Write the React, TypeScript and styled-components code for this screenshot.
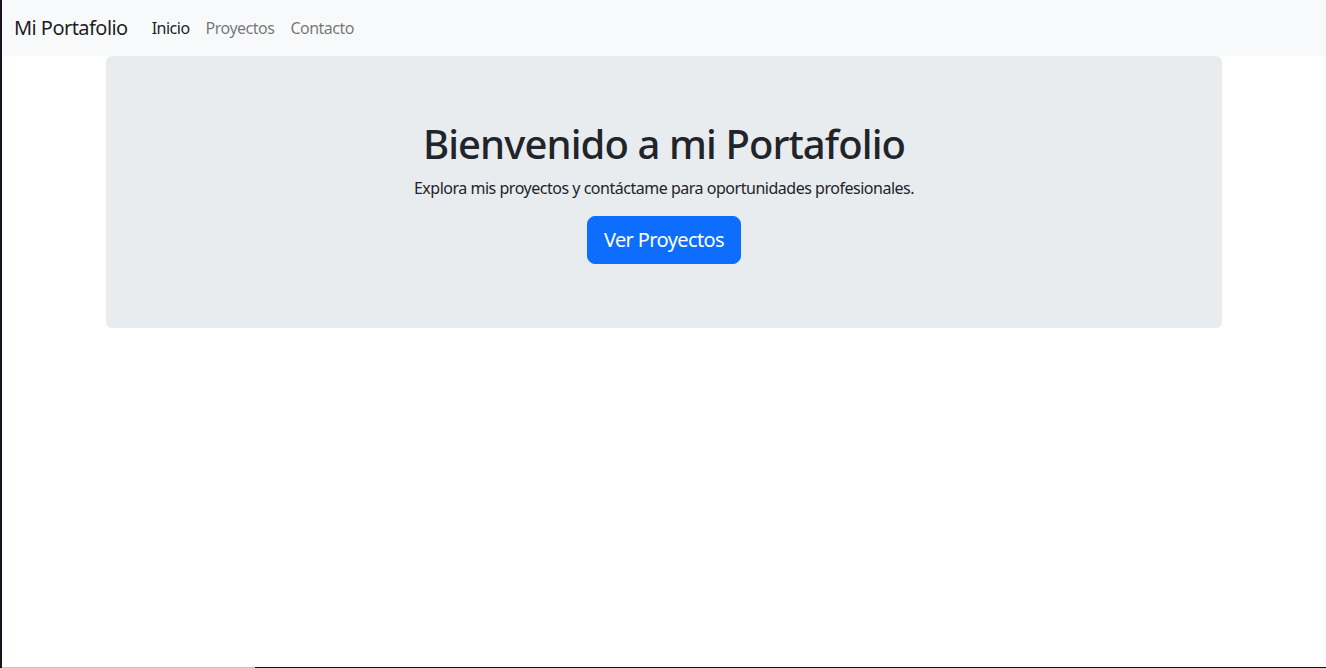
import styled, { createGlobalStyle } from 'styled-components';

const GlobalStyle = createGlobalStyle`
  html, body {
    margin: 0;
    padding: 0;
  }

  body {
    font-family: 'Noto Sans', 'Open Sans', sans-serif;
    color: #212529;
    background:
      linear-gradient(to right, #c4c4c4 255px, #111 255px) left bottom / 100% 1px no-repeat,
      #fff;
    min-height: 668px;
    box-sizing: border-box;
    border-left: 2px solid #1b1220;
  }

  *, *::before, *::after {
    box-sizing: border-box;
  }
`;

const Navbar = styled.nav`
  background-color: #f8f9fa;
  height: 56px;
  padding: 8px 12px;
  display: flex;
  align-items: center;
`;

const Brand = styled.a`
  font-size: 20px;
  line-height: 30px;
  letter-spacing: -0.55px;
  padding: 5px 0;
  margin-right: 16px;
  color: rgba(0, 0, 0, 0.9);
  text-decoration: none;
`;

const NavList = styled.ul`
  display: flex;
  list-style: none;
  margin: 0;
  padding: 0;
`;

const NavLink = styled.a<{ $active?: boolean }>`
  display: block;
  padding: 8px;
  font-size: 16px;
  line-height: 24px;
  letter-spacing: -0.5px;
  color: ${(p) => (p.$active ? 'rgba(0, 0, 0, 0.9)' : 'rgba(0, 0, 0, 0.55)')};
  text-decoration: none;
`;

const Container = styled.main`
  width: 1116px;
  margin: 0 auto;
`;

const Hero = styled.section`
  background-color: #e9ecef;
  border-radius: 6px;
  padding: 64px 16px;
  display: flex;
  flex-direction: column;
  align-items: center;
  text-align: center;
`;

const Title = styled.h1`
  margin: 0 0 8px;
  font-size: 40px;
  line-height: 48px;
  font-weight: 500;
  letter-spacing: -0.9px;
`;

const Lead = styled.p`
  margin: 0 0 16px;
  font-size: 16px;
  line-height: 24px;
  letter-spacing: -0.48px;
`;

const PrimaryButton = styled.a`
  display: inline-block;
  padding: 8px 16px;
  font-size: 20px;
  line-height: 30px;
  letter-spacing: -0.6px;
  border: 1px solid #0d6efd;
  border-radius: 8px;
  background-color: #0d6efd;
  color: #fff;
  text-decoration: none;
`;

export default function App() {
  const links = [
    { label: 'Inicio', active: true },
    { label: 'Proyectos' },
    { label: 'Contacto' },
  ];

  return (
    <>
      <GlobalStyle />
      <Navbar>
        <Brand href="#">Mi Portafolio</Brand>
        <NavList>
          {links.map((l) => (
            <li key={l.label}>
              <NavLink href="#" $active={l.active}>{l.label}</NavLink>
            </li>
          ))}
        </NavList>
      </Navbar>

      <Container>
        <Hero>
          <Title>Bienvenido a mi Portafolio</Title>
          <Lead>Explora mis proyectos y contáctame para oportunidades profesionales.</Lead>
          <PrimaryButton href="#">Ver Proyectos</PrimaryButton>
        </Hero>
      </Container>
    </>
  );
}
